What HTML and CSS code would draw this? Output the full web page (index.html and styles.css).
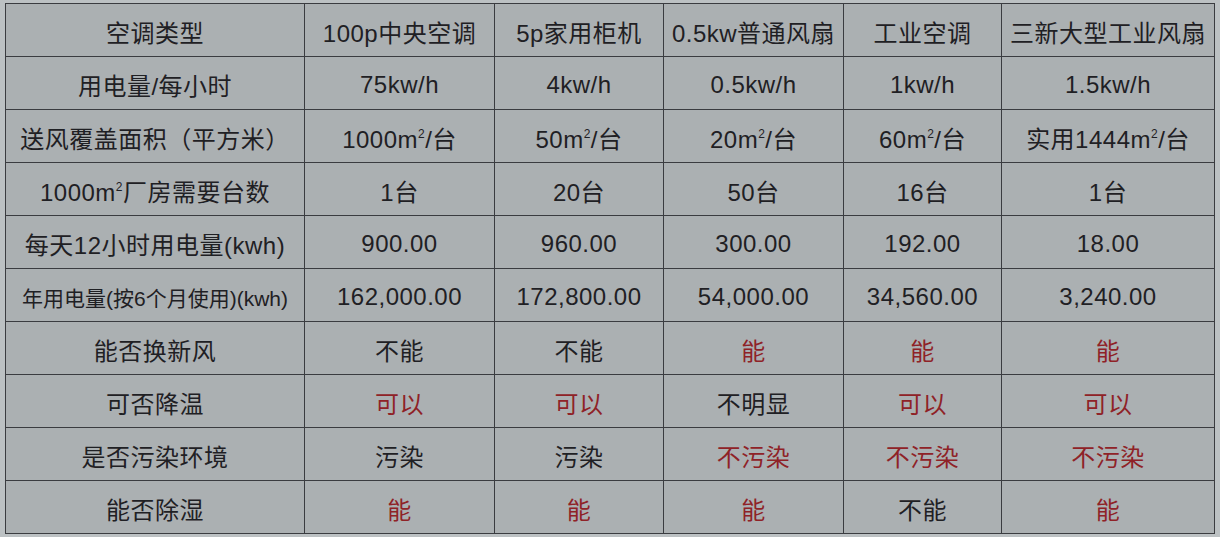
FILE: index.html
```html
<!DOCTYPE html>
<html lang="zh">
<head>
<meta charset="utf-8">
<link rel="stylesheet" href="styles.css">
</head>
<body>
<table class="cmp">
  <colgroup>
    <col class="c1"><col class="c2"><col class="c3"><col class="c4"><col class="c5"><col class="c6">
  </colgroup>
  <tr><td>空调类型</td><td>100p中央空调</td><td>5p家用柜机</td><td>0.5kw普通风扇</td><td>工业空调</td><td>三新大型工业风扇</td></tr>
  <tr><td>用电量/每小时</td><td>75kw/h</td><td>4kw/h</td><td>0.5kw/h</td><td>1kw/h</td><td>1.5kw/h</td></tr>
  <tr><td>送风覆盖面积（平方米）</td><td>1000m<sup>2</sup>/台</td><td>50m<sup>2</sup>/台</td><td>20m<sup>2</sup>/台</td><td>60m<sup>2</sup>/台</td><td>实用1444m<sup>2</sup>/台</td></tr>
  <tr><td>1000m<sup>2</sup>厂房需要台数</td><td>1台</td><td>20台</td><td>50台</td><td>16台</td><td>1台</td></tr>
  <tr><td>每天12小时用电量(kwh)</td><td>900.00</td><td>960.00</td><td>300.00</td><td>192.00</td><td>18.00</td></tr>
  <tr><td class="small">年用电量(按6个月使用)(kwh)</td><td>162,000.00</td><td>172,800.00</td><td>54,000.00</td><td>34,560.00</td><td>3,240.00</td></tr>
  <tr><td>能否换新风</td><td>不能</td><td>不能</td><td class="red">能</td><td class="red">能</td><td class="red">能</td></tr>
  <tr><td>可否降温</td><td class="red">可以</td><td class="red">可以</td><td>不明显</td><td class="red">可以</td><td class="red">可以</td></tr>
  <tr><td>是否污染环境</td><td>污染</td><td>污染</td><td class="red">不污染</td><td class="red">不污染</td><td class="red">不污染</td></tr>
  <tr><td>能否除湿</td><td class="red">能</td><td class="red">能</td><td class="red">能</td><td>不能</td><td class="red">能</td></tr>
</table>
</body>
</html>
```
FILE: styles.css
```css
html, body {
  margin: 0;
  background: #bcc1c3;
}
body {
  padding: 3px 0 0 5px;
  font-family: "Liberation Sans", "Noto Sans CJK SC", sans-serif;
  color: #1f2024;
}
.cmp {
  border-collapse: collapse;
  background: #abb0b2;
  table-layout: fixed;
  width: 1209px;
}
.c1 { width: 299px; }
.c2 { width: 190px; }
.c3 { width: 169px; }
.c4 { width: 180px; }
.c5 { width: 158px; }
.c6 { width: 213px; }
.cmp td {
  border: 1.5px solid #3a3c40;
  height: 53px;
  padding: 3px 0 0 0;
  box-sizing: border-box;
  text-align: center;
  vertical-align: middle;
  font-size: 24px;
  white-space: nowrap;
  letter-spacing: 0.5px;
}
.cmp td.small {
  font-size: 21px;
  letter-spacing: 0;
}
.cmp td.red {
  color: #8f2227;
}
sup {
  font-size: 12px;
  vertical-align: 10px;
  line-height: 0;
}
```
